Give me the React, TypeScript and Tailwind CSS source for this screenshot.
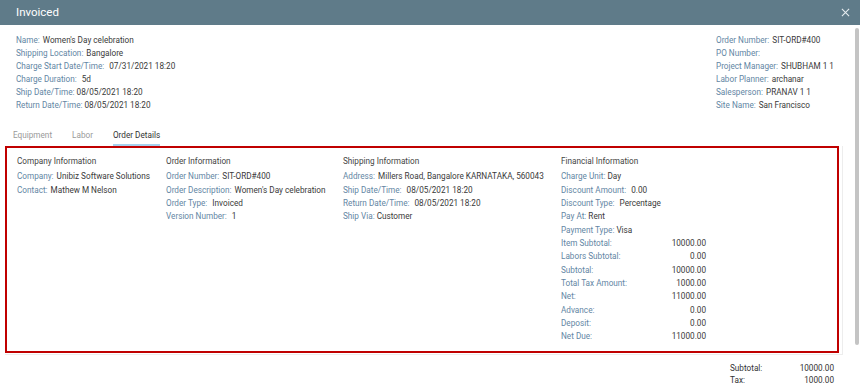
import React from "react";

const L = "text-[#6386a4]";
const V = "text-[#3a3a3a]";

function Row({ label, value, gap = "ml-[3px]" }: { label: string; value?: string; gap?: string }) {
  return (
    <div className="whitespace-nowrap">
      <span className={L}>{label}</span>
      {value !== undefined && <span className={`${V} ${gap}`}>{value}</span>}
    </div>
  );
}

function Money({ label, value }: { label: string; value: string }) {
  return (
    <div className="flex w-[145px] justify-between whitespace-nowrap">
      <span className={L}>{label}</span>
      <span className={V}>{value}</span>
    </div>
  );
}

export default function App() {
  return (
    <div
      className="relative h-[391px] w-[860px] overflow-hidden bg-white text-[8.2px]"
      style={{ fontFamily: "Roboto, 'Liberation Sans', sans-serif" }}
    >
      {/* Header */}
      <div className="flex h-[25px] items-center justify-between bg-[#5f7b89] pl-[16px] pr-[8px]">
        <span className="text-[11.5px] text-white">Invoiced</span>
        <svg width="9" height="9" viewBox="0 0 10 10" className="mr-[2px]">
          <path d="M1 1 L9 9 M9 1 L1 9" stroke="#e6ecef" strokeWidth="1.2" />
        </svg>
      </div>

      {/* Scrollbar */}
      <div className="absolute right-[1px] top-[28px] h-[317px] w-[4px] rounded-sm bg-[#c4c4c4]" />

      {/* Summary info */}
      <div className="flex justify-between pl-[16px] pt-[9px] leading-[13px]">
        <div className="flex flex-col">
          <Row label="Name:" value="Women's Day celebration" />
          <Row label="Shipping Location:" value="Bangalore" />
          <Row label="Charge Start Date/Time:" value="07/31/2021 18:20" gap="ml-[5px]" />
          <Row label="Charge Duration:" value="5d" gap="ml-[5px]" />
          <Row label="Ship Date/Time:" value="08/05/2021 18:20" gap="ml-[2px]" />
          <Row label="Return Date/Time:" value="08/05/2021 18:20" gap="ml-[2px]" />
        </div>
        <div className="flex w-[144px] flex-col">
          <Row label="Order Number:" value="SIT-ORD#400" />
          <Row label="PO Number:" />
          <Row label="Project Manager:" value="SHUBHAM 1 1" />
          <Row label="Labor Planner:" value="archanar" />
          <Row label="Salesperson:" value="PRANAV 1 1" />
          <Row label="Site Name:" value="San Francisco" />
        </div>
      </div>

      {/* Tabs */}
      <div className="mt-[17px] flex gap-[20px] pl-[13px] leading-[13px]">
        <div className="pb-[4px] text-[#9a9a9a]">Equipment</div>
        <div className="pb-[4px] text-[#9a9a9a]">Labor</div>
        <div className="border-b-2 border-[#a6d2ee] pb-[2px] text-[#333]">Order Details</div>
      </div>

      {/* Content box */}
      <div className="ml-[5px] w-[838px] border-b border-r border-[#ededed] pb-[1px] pr-[2px]">
        <div className="flex w-[834px] border-2 border-[#c00000] pb-[7px] pl-[10px] pt-[7px] leading-[13.33px]">
          <div className="flex w-[149px] flex-col">
            <div className="mb-[2px] text-[#444]">Company Information</div>
            <Row label="Company:" value="Unibiz Software Solutions" />
            <Row label="Contact:" value="Mathew M Nelson" />
          </div>
          <div className="flex w-[177px] flex-col">
            <div className="mb-[2px] text-[#444]">Order Information</div>
            <Row label="Order Number:" value="SIT-ORD#400" />
            <Row label="Order Description:" value="Women's Day celebration" />
            <Row label="Order Type:" value="Invoiced" gap="ml-[5px]" />
            <Row label="Version Number:" value="1" gap="ml-[5px]" />
          </div>
          <div className="flex w-[218px] flex-col">
            <div className="mb-[2px] text-[#444]">Shipping Information</div>
            <Row label="Address:" value="Millers Road, Bangalore KARNATAKA, 560043" />
            <Row label="Ship Date/Time:" value="08/05/2021 18:20" gap="ml-[5px]" />
            <Row label="Return Date/Time:" value="08/05/2021 18:20" gap="ml-[5px]" />
            <Row label="Ship Via:" value="Customer" gap="ml-[2px]" />
          </div>
          <div className="flex flex-col">
            <div className="mb-[2px] text-[#444]">Financial Information</div>
            <Row label="Charge Unit:" value="Day" gap="ml-[2px]" />
            <Row label="Discount Amount:" value="0.00" gap="ml-[5px]" />
            <Row label="Discount Type:" value="Percentage" gap="ml-[5px]" />
            <Row label="Pay At:" value="Rent" gap="ml-[2px]" />
            <Row label="Payment Type:" value="Visa" gap="ml-[2px]" />
            <Money label="Item Subtotal:" value="10000.00" />
            <Money label="Labors Subtotal:" value="0.00" />
            <Money label="Subtotal:" value="10000.00" />
            <Money label="Total Tax Amount:" value="1000.00" />
            <Money label="Net:" value="11000.00" />
            <Money label="Advance:" value="0.00" />
            <Money label="Deposit:" value="0.00" />
            <Money label="Net Due:" value="11000.00" />
          </div>
        </div>
      </div>

      {/* Totals */}
      <div className="mt-[7px] flex justify-end pr-[26px] leading-[12px]">
        <div className="flex w-[104px] flex-col">
          <div className="flex justify-between">
            <span className="text-[#333]">Subtotal:</span>
            <span className="text-[#333]">10000.00</span>
          </div>
          <div className="flex justify-between">
            <span className="text-[#333]">Tax:</span>
            <span className="text-[#333]">1000.00</span>
          </div>
        </div>
      </div>
    </div>
  );
}
